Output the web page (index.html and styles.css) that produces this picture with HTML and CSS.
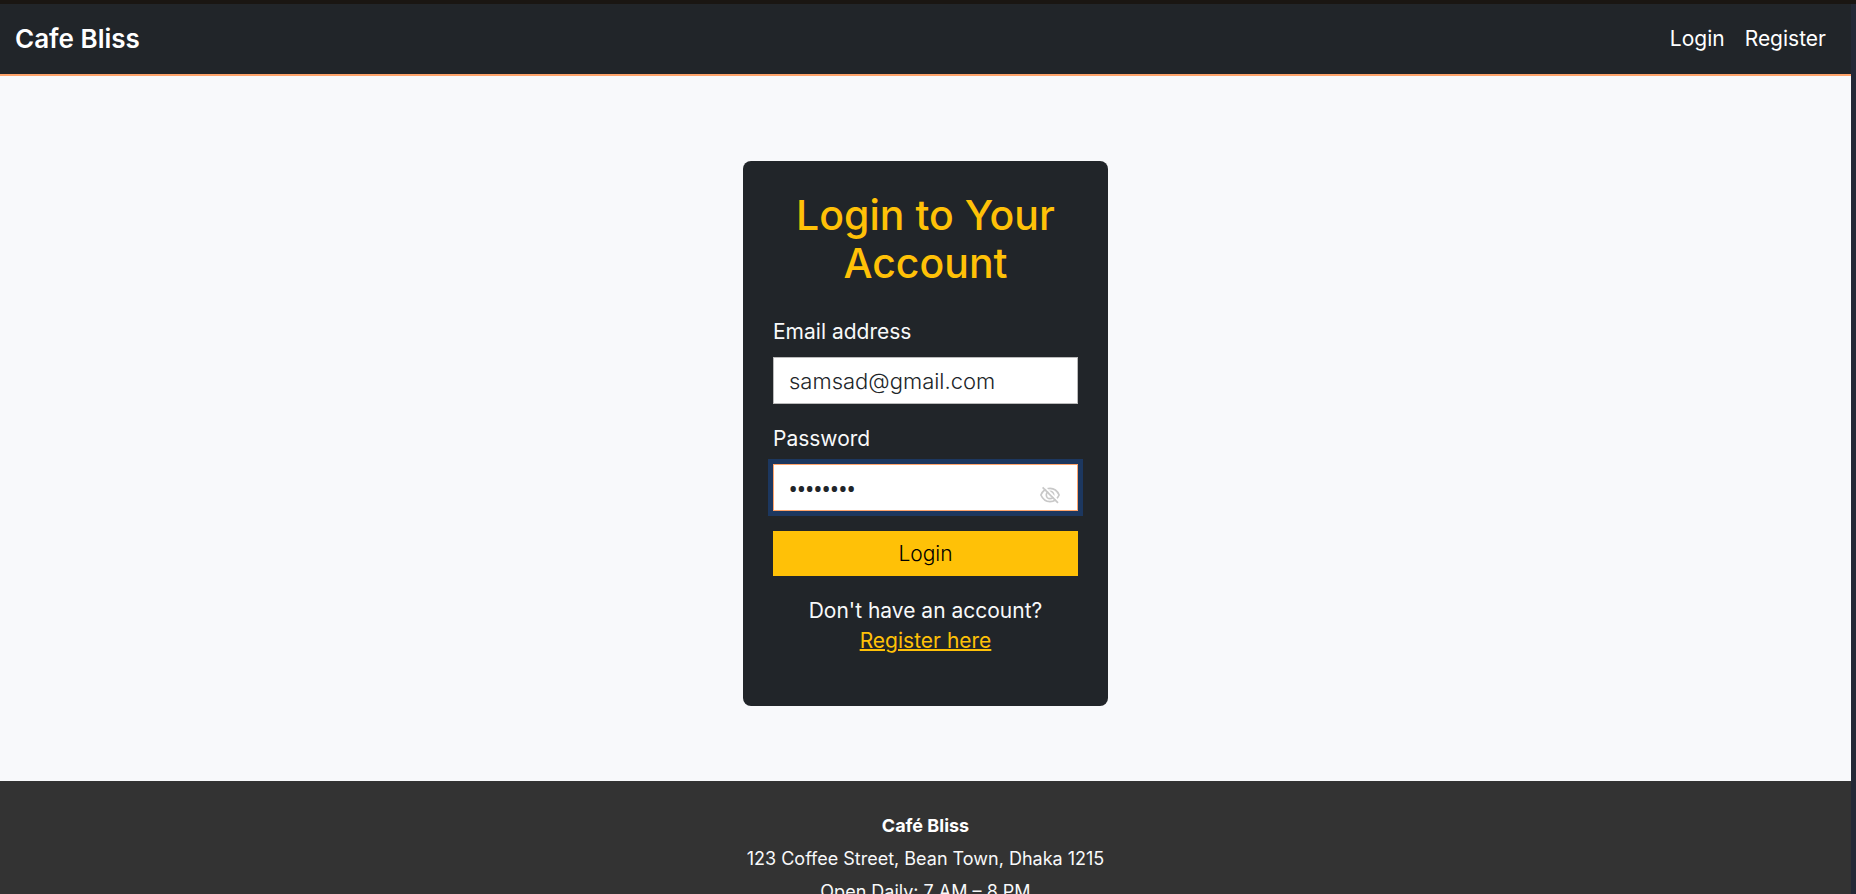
FILE: index.html
```html
<!DOCTYPE html>
<html lang="en">
<head>
<meta charset="utf-8">
<title>Cafe Bliss - Login</title>
<link rel="stylesheet" href="styles.css">
</head>
<body>
<div class="page">
  <header class="navbar">
    <a class="brand" href="#">Cafe Bliss</a>
    <nav class="nav-links">
      <a href="#">Login</a>
      <a href="#">Register</a>
    </nav>
  </header>
  <main class="content">
    <section class="card">
      <h1 class="card-title">Login to Your Account</h1>
      <form class="login-form">
        <div class="field">
          <label for="email">Email address</label>
          <input class="text-input" id="email" type="email" value="samsad@gmail.com">
        </div>
        <div class="field">
          <label for="password">Password</label>
          <div class="password-wrap">
            <input class="text-input is-active" id="password" type="password" value="password">
            <button class="toggle" type="button" aria-label="Show password">
              <svg width="20" height="18" viewBox="0 0 20 18" fill="none" stroke="#c8c8c8" stroke-width="1.700">
                <path d="M0.900 9C2.800 4.600 6 2.400 10 2.400S17.200 4.600 19.100 9C17.200 13.400 14 15.600 10 15.600S2.800 13.400 0.900 9Z"/>
                <circle cx="10" cy="9" r="3.700"/>
                <path d="M4.300 0.400L19 15.600" stroke="#fff"/>
                <path d="M2.600 1.300L18 16.900"/>
              </svg>
            </button>
          </div>
        </div>
        <button class="submit" type="submit">Login</button>
      </form>
      <p class="signup">Don't have an account? <a href="#">Register here</a></p>
    </section>
  </main>
  <footer class="footer">
    <p><strong>Café Bliss</strong></p>
    <p>123 Coffee Street, Bean Town, Dhaka 1215</p>
    <p>Open Daily: 7 AM – 8 PM</p>
  </footer>
</div>
</body>
</html>
```
FILE: styles.css
```css
* {
  box-sizing: border-box;
}

body {
  margin: 0;
  font-family: Inter, "Open Sans", sans-serif;
  font-size: 21px;
  line-height: 30px;
  color: #f8f9fa;
  background: #f8f9fb;
}

.page {
  display: flex;
  flex-direction: column;
  height: 100vh;
  overflow: hidden;
  background:
    linear-gradient(#1a1612, #1a1612) top / 100% 4px no-repeat,
    linear-gradient(#242936, #242936) right / 5px 100% no-repeat;
  padding: 4px 5px 0 0;
}

.navbar {
  display: flex;
  flex: none;
  align-items: center;
  justify-content: space-between;
  padding: 20px 25px 20px 15px;
  background: #212529;
  border-bottom: 2px solid #ffa46b;
}

.brand {
  color: #fff;
  font-size: 26px;
  font-weight: 600;
  text-decoration: none;
}

.nav-links {
  display: flex;
  gap: 20px;
}

.nav-links a {
  color: #fff;
  text-decoration: none;
}

.content {
  display: flex;
  flex: none;
  justify-content: center;
  padding: 85px 20px 75px;
}

.card {
  width: 365px;
  padding: 30px 30px 50px;
  background: #212529;
  border-radius: 8px;
}

.card-title {
  margin: 0 0 30px;
  color: #ffc107;
  font-size: 41px;
  font-weight: 500;
  line-height: 48px;
  text-align: center;
}

.login-form {
  display: flex;
  flex-direction: column;
  gap: 20px;
}

.field {
  display: flex;
  flex-direction: column;
  gap: 10px;
}

.text-input {
  display: block;
  width: 100%;
  height: 47px;
  padding: 8px 15px;
  border: 1px solid #bbb;
  border-radius: 0;
  outline: none;
  background: #fff;
  color: #212529;
  font: 300 22px/30px Inter, "Open Sans", sans-serif;
}

.is-active {
  border-color: #ffa46b;
  box-shadow: 0 0 0 5px #1c375f;
  font: 600 22px/30px "Open Sans", sans-serif;
}

.password-wrap {
  position: relative;
}

.toggle {
  position: absolute;
  right: 18px;
  bottom: 7px;
  display: flex;
  padding: 0;
  border: 0;
  background: none;
}

.submit {
  height: 45px;
  padding: 0;
  border: 0;
  background: #ffc107;
  color: #000;
  font: 300 21px/30px Inter, "Open Sans", sans-serif;
}

.signup {
  margin: 20px 0 0;
  text-align: center;
}

.signup a {
  color: #ffc107;
  text-decoration-thickness: 2px;
}

.footer {
  flex: none;
  padding: 28px 20px;
  background: #333;
  font-size: 18px;
  line-height: 33px;
  text-align: center;
}

.footer p {
  margin: 0;
}

.footer strong {
  color: #fff;
  font-weight: 700;
}
```
